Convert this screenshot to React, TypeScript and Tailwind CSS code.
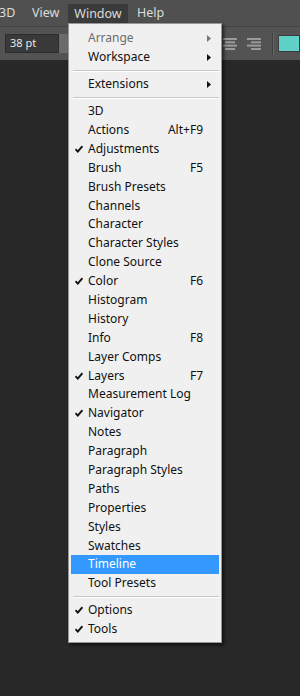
import React from 'react';

type Item =
  | { kind: 'sep' }
  | { kind: 'item'; label: string; shortcut?: string; checked?: boolean; submenu?: boolean; disabled?: boolean; active?: boolean };

const items: Item[] = [
  { kind: 'item', label: 'Arrange', submenu: true, disabled: true },
  { kind: 'item', label: 'Workspace', submenu: true },
  { kind: 'sep' },
  { kind: 'item', label: 'Extensions', submenu: true },
  { kind: 'sep' },
  { kind: 'item', label: '3D' },
  { kind: 'item', label: 'Actions', shortcut: 'Alt+F9' },
  { kind: 'item', label: 'Adjustments', checked: true },
  { kind: 'item', label: 'Brush', shortcut: 'F5' },
  { kind: 'item', label: 'Brush Presets' },
  { kind: 'item', label: 'Channels' },
  { kind: 'item', label: 'Character' },
  { kind: 'item', label: 'Character Styles' },
  { kind: 'item', label: 'Clone Source' },
  { kind: 'item', label: 'Color', shortcut: 'F6', checked: true },
  { kind: 'item', label: 'Histogram' },
  { kind: 'item', label: 'History' },
  { kind: 'item', label: 'Info', shortcut: 'F8' },
  { kind: 'item', label: 'Layer Comps' },
  { kind: 'item', label: 'Layers', shortcut: 'F7', checked: true },
  { kind: 'item', label: 'Measurement Log' },
  { kind: 'item', label: 'Navigator', checked: true },
  { kind: 'item', label: 'Notes' },
  { kind: 'item', label: 'Paragraph' },
  { kind: 'item', label: 'Paragraph Styles' },
  { kind: 'item', label: 'Paths' },
  { kind: 'item', label: 'Properties' },
  { kind: 'item', label: 'Styles' },
  { kind: 'item', label: 'Swatches' },
  { kind: 'item', label: 'Timeline', active: true },
  { kind: 'item', label: 'Tool Presets' },
  { kind: 'sep' },
  { kind: 'item', label: 'Options', checked: true },
  { kind: 'item', label: 'Tools', checked: true },
];

const Check = () => (
  <svg width="8" height="8" viewBox="0 0 8 8" className="block">
    <path d="M0.5 4.2 L2.8 6.6 L7.4 1.2" fill="none" stroke="#111" strokeWidth="1.9" />
  </svg>
);

const Arrow = ({ color }: { color: string }) => (
  <svg width="4" height="7" viewBox="0 0 4 7" className="block">
    <path d="M0 0 L4 3.5 L0 7 Z" fill={color} />
  </svg>
);

const AlignIcon = () => (
  <svg width="14" height="12" viewBox="0 0 14 12" className="block">
    <rect x="0" y="0" width="14" height="2" fill="#9a9a9a" />
    <rect x="2" y="3.3" width="10" height="2" fill="#9a9a9a" />
    <rect x="0" y="6.6" width="14" height="2" fill="#9a9a9a" />
    <rect x="2" y="10" width="10" height="2" fill="#9a9a9a" />
  </svg>
);

const AlignRightIcon = () => (
  <svg width="14" height="12" viewBox="0 0 14 12" className="block">
    <rect x="0" y="0" width="14" height="2" fill="#9a9a9a" />
    <rect x="4" y="3.3" width="10" height="2" fill="#9a9a9a" />
    <rect x="0" y="6.6" width="14" height="2" fill="#9a9a9a" />
    <rect x="4" y="10" width="10" height="2" fill="#9a9a9a" />
  </svg>
);

export default function App() {
  return (
    <div
      className="relative w-[300px] h-[696px] overflow-hidden bg-[#282828]"
      style={{ fontFamily: '"Noto Sans", "Open Sans", sans-serif' }}
    >
      {/* menu bar */}
      <div className="h-[26px] bg-[#505050] flex items-center text-[12.5px] text-[#dcdcdc]">
        <span className="w-[33px] -ml-[1px]">3D</span>
        <span className="w-[36px]">View</span>
        <span className="w-[60px] h-[20px] mt-[2px] bg-[#3b3b3b] flex items-center justify-center">Window</span>
        <span className="ml-[9px]">Help</span>
      </div>

      {/* options bar */}
      <div className="h-[34px] bg-[#535353] border-t border-[#444] flex items-center">
        <div className="ml-[5px] flex h-[19px]">
          <div className="w-[54px] bg-[#393939] border border-[#2c2c2c] text-[11px] text-[#e8e8e8] flex items-center pl-[4px]">
            38 pt
          </div>
          <div className="w-[12px] bg-[#6b6b6b]" />
        </div>
        <div className="ml-auto flex items-center">
          <AlignIcon />
          <div className="w-[10px]" />
          <AlignRightIcon />
          <div className="ml-[11px] w-[1px] h-[22px] bg-[#3e3e3e]" />
          <div className="w-[1px] h-[22px] bg-[#666]" />
          <div className="ml-[4px] w-[22px] h-[17px] bg-[#5fd1c6] border border-[#3c3c3c]" />
        </div>
      </div>

      {/* Window menu */}
      <div className="absolute left-[68px] top-[23px] w-[154px] bg-[#f0f0f0] border border-[#979797] shadow-[2px_2px_3px_rgba(0,0,0,0.6)] pt-[5px] pb-[3px] px-[2px] text-[12px] text-[#111]">
        {items.map((it, i) =>
          it.kind === 'sep' ? (
            <div key={i} className="h-[8px] flex items-center pl-[2px]">
              <div className="w-full h-[2px] border-t border-[#c8c8c8] border-b border-b-white" />
            </div>
          ) : (
            <div
              key={i}
              className={
                'h-[18.9px] flex items-center relative ' +
                (it.active ? 'bg-[#3399ff] text-white' : it.disabled ? 'text-[#6d6d6d]' : '')
              }
            >
              <div className="w-[17px] flex justify-start pl-[4px]">{it.checked && <Check />}</div>
              <span className="leading-none">{it.label}</span>
              {it.shortcut && <span className="ml-auto mr-[16px] leading-none">{it.shortcut}</span>}
              {it.submenu && (
                <div className="ml-auto mr-[8px]">
                  <Arrow color={it.disabled ? '#777' : '#111'} />
                </div>
              )}
            </div>
          )
        )}
      </div>
    </div>
  );
}
